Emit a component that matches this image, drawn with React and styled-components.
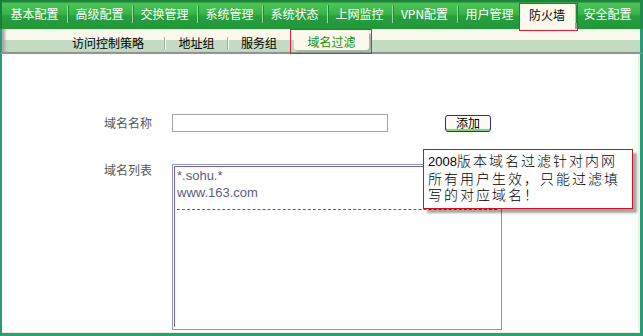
import React from "react";
import styled, { createGlobalStyle } from "styled-components";

const GlobalStyle = createGlobalStyle`
  body {
    margin: 0;
    background: #ffffff;
    font-family: "Noto Sans CJK SC", "Liberation Sans", sans-serif;
  }
`;

const Page = styled.div`
  width: 643px;
  height: 336px;
  display: flex;
  flex-direction: column;
  overflow: hidden;
  background: #ffffff;
  font-size: 12px;
`;

// 상단 메뉴 (green bar)
const TopNav = styled.div`
  display: flex;
  height: 29px;
  box-sizing: border-box;
  border-left: 2px solid #1b7d3a;
  border-right: 3px solid #1f8a4a;
  background: linear-gradient(
    to bottom,
    #1d833a 0,
    #1d833a 2px,
    #4cc456 3px,
    #38b54a 14px,
    #27a03d 16px,
    #22963a 100%
  );
`;

const NavItem = styled.div`
  position: relative;
  width: ${(p) => p.w || 65}px;
  flex-shrink: 0;
  display: flex;
  align-items: center;
  justify-content: center;
  padding-bottom: 3px;
  box-sizing: border-box;
  color: #ffffff;
  white-space: nowrap;

  &::before {
    content: "";
    display: ${(p) => (p.first ? "none" : "block")};
    position: absolute;
    left: 0;
    top: 5px;
    bottom: 6px;
    width: 1px;
    background: #9ed8a0;
    box-shadow: 1px 0 0 #1e8a36;
  }
`;

const ActiveNavItem = styled.div`
  position: relative;
  width: 56px;
  margin-left: -3px;
  margin-top: 3px;
  flex-shrink: 0;
  display: flex;
  align-items: center;
  justify-content: center;
  padding-bottom: 4px;
  box-sizing: border-box;
  background: #fdf9ec;
  color: #000000;
  box-shadow: 3px 0 0 #9c9c9c;

  &::after {
    content: "";
    position: absolute;
    left: 0;
    top: 0;
    right: -3px;
    bottom: -2px;
    border: 1px solid #e0203a;
  }
`;

const SubNav = styled.div`
  display: flex;
  height: 25px;
  box-sizing: border-box;
  padding-left: 57px;
  border-left: 2px solid #2a9a78;
  border-right: 3px solid #2a9a78;
  border-bottom: 2px solid #929492;
  background: linear-gradient(to bottom, #fdf8ec 0, #fdf8ec 11px, #c2dbc1 11px);
  box-shadow: inset 4px 0 3px -1px #a6a6a6;
`;

const SubItem = styled.div`
  position: relative;
  width: ${(p) => p.w}px;
  flex-shrink: 0;
  display: flex;
  align-items: center;
  justify-content: ${(p) => (p.left ? "flex-start" : "center")};
  padding-left: ${(p) => (p.left ? 13 : 0)}px;
  padding-top: 3px;
  box-sizing: border-box;
  color: #000000;
  white-space: nowrap;

  &::after {
    content: "";
    display: ${(p) => (p.sep ? "block" : "none")};
    position: absolute;
    right: 0;
    top: 8px;
    bottom: 3px;
    width: 1px;
    background: #a8aca8;
    box-shadow: 1px 0 0 #ffffff;
  }
`;

const SubActive = styled.div`
  width: 82px;
  margin-bottom: -2px;
  padding: 1px 2px 3px 3px;
  box-sizing: border-box;
  border: 1px solid #e3203a;
  display: flex;
  flex-shrink: 0;
`;

const SubPill = styled.div`
  flex: 1;
  display: flex;
  align-items: center;
  justify-content: center;
  padding-top: 2px;
  border-radius: 3px;
  background: #fdf8ec;
  box-shadow: 2px 2px 0 #a8b8a8;
  color: #129312;
`;

const Content = styled.div`
  position: relative;
  flex: 1;
  box-sizing: border-box;
  padding: 60px 0 0 102px;
  border-left: 2px solid #2a9a78;
  border-right: 3px solid #2a9a78;
  border-bottom: 3px solid #2aa07a;
  box-shadow: inset -2px -1px 0 #eef2dc;
`;

const Row = styled.div`
  display: flex;
  align-items: ${(p) => (p.top ? "flex-start" : "center")};
  margin-top: ${(p) => p.mt || 0}px;
`;

const Label = styled.div`
  width: 68px;
  flex-shrink: 0;
  color: #555555;
  line-height: 14px;
  margin-top: ${(p) => p.mt || 0}px;
`;

const TextInput = styled.div`
  width: 216px;
  height: 18px;
  box-sizing: border-box;
  border: 1px solid #a4a4a4;
  background: #ffffff;
`;

const Button = styled.div`
  width: 46px;
  height: 17px;
  margin-left: 57px;
  box-sizing: border-box;
  border: 1px solid #3a2a78;
  border-radius: 3px;
  background: #fcfcf4;
  box-shadow: inset 0 -2px 0 #7cd47c;
  display: flex;
  align-items: center;
  justify-content: center;
  padding-bottom: 1px;
  color: #000000;
  line-height: 12px;
`;

const ListBox = styled.div`
  width: 330px;
  height: 166px;
  box-sizing: border-box;
  border: 1px solid #7f9db9;
  padding: 1px 0 2px 1px;
  display: flex;
`;

const ListInner = styled.div`
  flex: 1;
  border-top: 1px solid #8a5a8a;
  border-left: 1px solid #8a5a8a;
  padding-left: 2px;
  font-family: "Liberation Sans", Arial, sans-serif;
  font-size: 13px;
  line-height: 17px;
  color: #5c5c80;
`;

const Divider = styled.div`
  margin: 8px 4px 0 0;
  border-top: 1px dashed #5c5c78;
`;

const Tip = styled.div`
  position: absolute;
  left: 421px;
  top: 95px;
  width: 210px;
  height: 60px;
  box-sizing: border-box;
  padding: 2px 0 0 4px;
  border: 1px solid #d01020;
  background: #ffffff;
  box-shadow: 4px 4px 2px rgba(0, 0, 0, 0.35);
  color: #000000;
  font-family: "Noto Sans CJK SC", sans-serif;
  font-size: 14px;
  font-weight: 300;
  letter-spacing: 2px;
  line-height: 16px;
  white-space: nowrap;
`;

const Num = styled.span`
  font-family: "Liberation Sans", Arial, sans-serif;
  font-size: 13px;
  letter-spacing: 0;
`;

const topMenu = [
  "基本配置",
  "高级配置",
  "交换管理",
  "系统管理",
  "系统状态",
  "上网监控",
  "VPN配置",
  "用户管理",
];

function App() {
  return (
    <Page>
      <GlobalStyle />
      <TopNav>
        {topMenu.map((m, i) => (
          <NavItem key={m} first={i === 0}>
            {m}
          </NavItem>
        ))}
        <ActiveNavItem>防火墙</ActiveNavItem>
        <NavItem>安全配置</NavItem>
      </TopNav>
      <SubNav>
        <SubItem w={106} left sep>
          访问控制策略
        </SubItem>
        <SubItem w={63} sep>
          地址组
        </SubItem>
        <SubItem w={62}>服务组</SubItem>
        <SubActive>
          <SubPill>域名过滤</SubPill>
        </SubActive>
      </SubNav>
      <Content>
        <Row>
          <Label>域名名称</Label>
          <TextInput />
          <Button>添加</Button>
        </Row>
        <Row top mt={32}>
          <Label mt={-1}>域名列表</Label>
          <ListBox>
            <ListInner>
              <div>*.sohu.*</div>
              <div>www.163.com</div>
              <Divider />
            </ListInner>
          </ListBox>
        </Row>
        <Tip>
          <Num>2008</Num>版本域名过滤针对内网
          <br />
          所有用户生效，只能过滤填
          <br />
          写的对应域名！
        </Tip>
      </Content>
    </Page>
  );
}

export default App;
